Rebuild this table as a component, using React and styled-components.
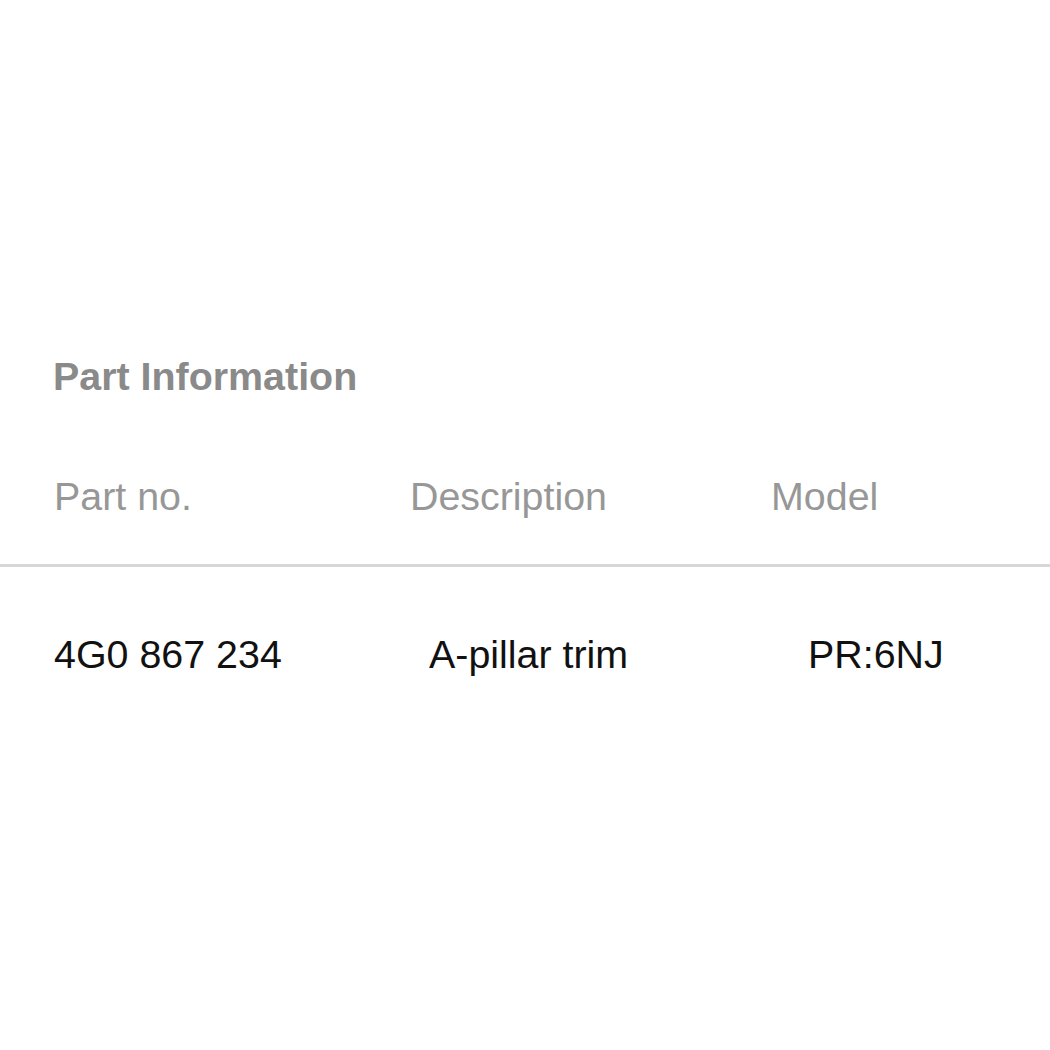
import React from "react";
import styled, { createGlobalStyle } from "styled-components";

const Global = createGlobalStyle`
  html, body { margin: 0; padding: 0; background: #ffffff; }
  body { font-family: "Liberation Sans", Arial, sans-serif; }
`;

const Page = styled.div`
  width: 1050px;
  height: 1050px;
  box-sizing: border-box;
  padding-top: 354px;
  background: #ffffff;
  font-size: 39.4px;
  line-height: 45px;
`;

const Title = styled.h2`
  margin: 0 0 75px 53px;
  font-size: inherit;
  line-height: inherit;
  font-weight: 700;
  color: #8a8a8a;
`;

const Row = styled.div`
  display: grid;
  grid-template-columns: ${(p) => p.$cols};
  padding-left: ${(p) => p.$left}px;
`;

const HeadRow = styled(Row)`
  padding-bottom: 45px;
  border-bottom: 3px solid #d6d6d6;
`;

const DataRow = styled(Row)`
  padding-top: 65px;
`;

const HeadCell = styled.div`
  color: #979797;
  white-space: nowrap;
`;

const Cell = styled.div`
  color: #111111;
  white-space: nowrap;
`;

export default function App() {
  return (
    <>
      <Global />
      <Page>
        <Title>Part Information</Title>
        <HeadRow $cols="356px 361px 1fr" $left={54}>
          <HeadCell>Part no.</HeadCell>
          <HeadCell>Description</HeadCell>
          <HeadCell>Model</HeadCell>
        </HeadRow>
        <DataRow $cols="375px 379px 1fr" $left={54}>
          <Cell>4G0 867 234</Cell>
          <Cell>A-pillar trim</Cell>
          <Cell>PR:6NJ</Cell>
        </DataRow>
      </Page>
    </>
  );
}
